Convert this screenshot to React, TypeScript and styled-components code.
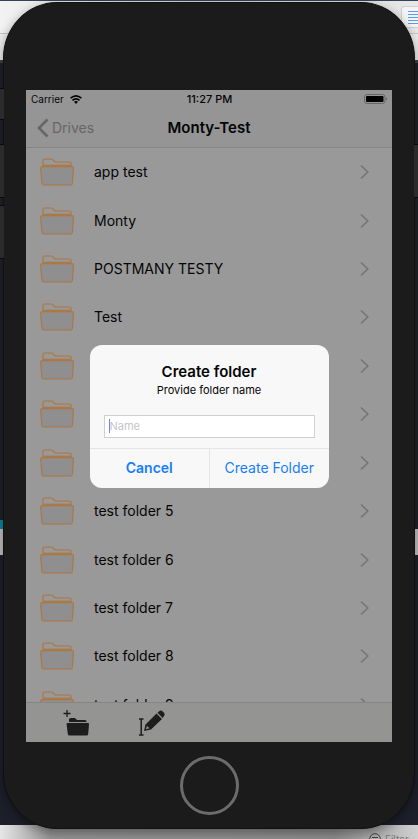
import React, { useState } from "react";
import styled, { createGlobalStyle } from "styled-components";

const GlobalStyle = createGlobalStyle`
  * { box-sizing: border-box; }
  html, body, #root { height: 100%; }
  body {
    margin: 0;
    overflow: hidden;
    font-family: Inter, "Liberation Sans", sans-serif;
    color: #050505;
  }
  button, input { font: inherit; }
  button { border: 0; padding: 0; background: none; cursor: pointer; }
`;

const Stage = styled.div`
  position: relative;
  height: 100%;
  padding: 2px 3px 10px;
  display: flex;
`;

/* Desktop windows that show around the simulator */
const Desktop = styled.div`
  position: absolute;
  inset: 0;
  z-index: -1;
  display: flex;
  flex-direction: column;
  background: #1d202b;
`;

const Strip = styled.div<{ $height: number; $fill: string }>`
  flex: 0 0 ${(p) => p.$height}px;
  background: ${(p) => p.$fill};
`;

const ToolStrip = styled.div`
  flex: 0 0 33px;
  display: flex;
  justify-content: flex-end;
  align-items: center;
  background: linear-gradient(90deg, #f2f2f2, #d4d4d4 50%, #e8e8e8);
  border-bottom: 1px solid #c8c8c8;
`;

const AlignButton = styled.button`
  width: 17px;
  height: 22px;
  border: 1px solid #d0d0d0;
  border-right: 0;
  border-radius: 4px 0 0 4px;
  background: #f4f4f4;
  display: flex;
  align-items: center;
  justify-content: flex-end;
`;

const Editor = styled.div`
  flex: 1;
  background: #1d202b;
`;

const FilterStrip = styled.div`
  flex: 0 0 14px;
  min-height: 0;
  overflow: hidden;
  display: flex;
  justify-content: flex-end;
  background: linear-gradient(90deg, #e6e6e6, #979797 12%, #909090 80%, #cfcfcf);
`;

const Filter = styled.label`
  flex: 0 0 54px;
  padding: 6px 0 0 4px;
  border-left: 1px solid #aaa;
  display: flex;
  gap: 4px;
  font-size: 10px;
  line-height: 16px;
  color: #777;

  svg { flex: none; margin-top: 2px; }
`;

const Phone = styled.main`
  position: relative;
  flex: 1;
  min-width: 0;
  display: flex;
  flex-direction: column;
  align-items: center;
  padding: 87px 22px 0;
  background: #1b1b1b;
  border: 1px solid #111;
  border-radius: 54px / 56px;
  box-shadow: 0 4px 12px rgba(0, 0, 0, 0.4);
`;

const SideKey = styled.span<{ $side: "left" | "right"; $top: number; $height: number }>`
  position: absolute;
  ${(p) => p.$side}: -4px;
  top: ${(p) => p.$top}px;
  width: 4px;
  height: ${(p) => p.$height}px;
  background: #2b2b2b;
  border: solid #0a0a0a;
  border-width: 1px 0;
`;

const Screen = styled.section`
  position: relative;
  align-self: stretch;
  flex: 1;
  min-height: 0;
  display: flex;
  flex-direction: column;
  background: #999;
`;

const StatusBar = styled.div`
  flex: 0 0 18px;
  display: grid;
  grid-template-columns: 1fr auto 1fr;
  align-items: center;
  padding: 0 4px 0 5px;
  background: #959595;
  font-size: 10px;
  line-height: 18px;
`;

const Carrier = styled.span`
  display: flex;
  align-items: center;
  gap: 6px;
`;

const Clock = styled.time`
  font-size: 11px;
  font-weight: 500;
`;

const Battery = styled.svg`
  justify-self: end;
`;

const NavBar = styled.header`
  flex: 0 0 40px;
  display: grid;
  grid-template-columns: 1fr auto 1fr;
  align-items: center;
  padding: 0 11px;
  background: #959595;
  border-bottom: 1px solid #858585;
`;

const BackButton = styled.button`
  justify-self: start;
  display: flex;
  align-items: center;
  gap: 3px;
  font-size: 14px;
  line-height: 20px;
  color: #666;
`;

const Title = styled.h1`
  margin: 0;
  font-size: 15px;
  line-height: 20px;
  font-weight: 600;
`;

const ListView = styled.div`
  flex: 1;
  min-height: 0;
  overflow: hidden;
`;

const Folders = styled.ul`
  margin: 0;
  padding: 0;
  height: 581px;
  list-style: none;
  display: grid;
  grid-auto-rows: 1fr;
`;

const FolderRow = styled.button`
  width: 100%;
  height: 100%;
  display: flex;
  align-items: center;
  padding: 0 23px 0 14px;
  color: inherit;
`;

const FolderName = styled.span`
  flex: 1;
  padding-left: 20px;
  text-align: left;
  font-size: 14px;
  line-height: 20px;
`;

const Toolbar = styled.footer`
  flex: 0 0 40px;
  display: flex;
  align-items: center;
  gap: 47px;
  padding: 0 37px;
  background: #949492;
  border-top: 1px solid #858585;
`;

const ToolButton = styled.button`
  display: flex;
`;

const Overlay = styled.div`
  position: absolute;
  inset: 0;
  display: flex;
  align-items: center;
  justify-content: center;
`;

const Dialog = styled.form`
  width: 239px;
  border-radius: 12px;
  overflow: hidden;
  background: #f8f8f8;
  text-align: center;
`;

const DialogBody = styled.div`
  padding: 17px 14px 10px;
`;

const DialogTitle = styled.h2`
  margin: 0;
  font-size: 15px;
  line-height: 20px;
  font-weight: 600;
`;

const DialogText = styled.label`
  display: block;
  font-size: 11px;
  line-height: 17px;
`;

const Field = styled.div`
  display: flex;
  align-items: center;
  height: 23px;
  margin-top: 16px;
  padding-left: 4px;
  border: 1px solid #d0d0d2;
  background: #fff;
`;

const Caret = styled.span`
  flex: 0 0 1px;
  height: 14px;
  background: #6f86f5;
`;

const NameInput = styled.input`
  flex: 1;
  min-width: 0;
  padding: 0;
  border: 0;
  outline: 0;
  background: transparent;
  font-size: 11px;
  line-height: 16px;
  &::placeholder { color: #c4c4c8; opacity: 1; }
`;

const Actions = styled.div`
  display: grid;
  grid-template-columns: 1fr 1fr;
  border-top: 1px solid #e6e6e6;
`;

const Action = styled.button<{ $strong?: boolean }>`
  height: 39px;
  font-size: 14px;
  line-height: 20px;
  font-weight: ${(p) => (p.$strong ? 600 : 400)};
  color: #157efb;
  white-space: nowrap;
  & + & { border-left: 1px solid #e6e6e6; }
`;

const Chin = styled.div`
  flex: 0 0 86px;
  display: flex;
  align-items: center;
  justify-content: center;
`;

const HomeButton = styled.button`
  width: 59px;
  height: 59px;
  border: 3px solid #6c6c6c;
  border-radius: 50%;
`;

const folders = [
  "app test", "Monty", "POSTMANY TESTY", "Test", "", "", "",
  "test folder 5", "test folder 6", "test folder 7", "test folder 8", "test folder 9",
];

const FolderIcon = () => (
  <svg width="34" height="28" viewBox="0 0 34 28" fill="none" stroke="#ad7742" strokeWidth="1.2" strokeLinejoin="round" aria-hidden="true">
    <path d="M3 8V2.500Q3 1 4.500 1H11Q12.200 1 13 2L14.500 3.500Q15 4 16 4H29.500Q31 4 31 5.500V8" />
    <path d="M3.500 7.300H30.500" />
    <path fill="#8f8f8f" d="M2.200 8.600H31.800Q33.500 8.600 33.400 10.300L32.400 25.300Q32.200 27 30.500 27H3.800Q2.100 27 1.900 25.300L.7 10.300Q.6 8.600 2.200 8.600Z" />
  </svg>
);

const Chevron = () => (
  <svg width="9" height="16" viewBox="0 0 9 16" fill="none" stroke="#747474" strokeWidth="1.5" aria-hidden="true">
    <path d="M1 1.500 7.800 8 1 14.500" />
  </svg>
);

export default function App() {
  const [name, setName] = useState("");
  return (
    <>
      <GlobalStyle />
      <Stage>
        <Desktop>
          <Strip $height={1} $fill="#34435c" />
          <ToolStrip>
            <AlignButton aria-label="Align">
              <svg width="10" height="13" viewBox="0 0 10 13" stroke="#5a9df0" aria-hidden="true">
                <path d="M0 .5H10M0 3.500H10M0 6.500H10M0 9.500H10M0 12.500H10" />
              </svg>
            </AlignButton>
          </ToolStrip>
          <Strip $height={26} $fill="#eeeeee" />
          <Strip $height={3} $fill="#41434c" />
          <Strip $height={457} $fill="#1f222c" />
          <Strip $height={9} $fill="linear-gradient(90deg, #0a87a3 50%, #1d202b 50%)" />
          <Strip $height={26} $fill="#c4c4c4" />
          <Editor />
          <FilterStrip>
            <Filter>
              <svg width="12" height="12" viewBox="0 0 12 12" fill="none" stroke="#444" aria-hidden="true">
                <circle cx="6" cy="6" r="5.300" />
                <path d="M3 4.500H9M4 6.500H8M5 8.500H7" />
              </svg>
              Filter
            </Filter>
          </FilterStrip>
        </Desktop>

        <Phone>
          <SideKey $side="left" $top={85} $height={32} />
          <SideKey $side="left" $top={141} $height={54} />
          <SideKey $side="left" $top={202} $height={54} />
          <SideKey $side="right" $top={141} $height={54} />
          <Screen>
            <StatusBar>
              <Carrier>
                Carrier
                <svg width="12" height="9" viewBox="0 0 12 9" fill="none" stroke="#000" strokeWidth="1.700" aria-hidden="true">
                  <path d="M.6 3.200Q6-1.400 11.400 3.200" />
                  <path d="M2.500 5.400Q6 2.400 9.500 5.400" />
                  <path d="M4 6.800Q6 5.200 8 6.800L6 8.900Z" fill="#000" stroke="none" />
                </svg>
              </Carrier>
              <Clock>11:27 PM</Clock>
              <Battery width="24" height="10" viewBox="0 0 24 10" aria-label="Battery full">
                <rect x=".5" y=".5" width="20.500" height="9" rx="2.500" fill="none" stroke="#666" />
                <rect x="2" y="2" width="17.500" height="6" rx="1" />
                <path d="M22 3.300Q24 5 22 6.700Z" fill="#666" />
              </Battery>
            </StatusBar>
            <NavBar>
              <BackButton>
                <svg width="12" height="20" viewBox="0 0 12 20" fill="none" stroke="#666" strokeWidth="2.600" aria-hidden="true">
                  <path d="M10.500 1.500 2 10 10.500 18.500" />
                </svg>
                Drives
              </BackButton>
              <Title>Monty-Test</Title>
            </NavBar>
            <ListView>
              <Folders>
                {folders.map((folder, index) => (
                  <li key={index}>
                    <FolderRow aria-label={folder || "Folder"}>
                      <FolderIcon />
                      <FolderName>{folder}</FolderName>
                      <Chevron />
                    </FolderRow>
                  </li>
                ))}
              </Folders>
            </ListView>
            <Toolbar>
              <ToolButton aria-label="New folder">
                <svg width="28" height="28" viewBox="0 0 28 28" fill="#1d1d1d" aria-hidden="true">
                  <path d="M4 1V8M.5 4.500H7.500" stroke="#1d1d1d" strokeWidth="1.300" />
                  <path d="M6 12V10.500Q6 9 7.500 9H12L14 11H22Q23.500 11 23.500 12.500V13H6Z" />
                  <path d="M4.500 14H25Q26.100 14 26 15.200L25.200 25Q25 26.500 23.600 26.500H6.300Q5 26.500 4.800 25L3.600 15.200Q3.500 14 4.500 14Z" />
                </svg>
              </ToolButton>
              <ToolButton aria-label="Rename">
                <svg width="28" height="28" viewBox="0 0 28 28" fill="#1d1d1d" aria-hidden="true">
                  <path d="M1 10H5.500M3.200 10V26M1 26H5.500" stroke="#1d1d1d" strokeWidth="1.500" />
                  <path fillRule="evenodd" d="M7.500 15.500 18.500 4.500 24 10 13 20.500 6 22ZM9 17 7.800 20.200 11.500 19.300Z" />
                  <path d="M19.500 3.800 21.500 2Q23 .8 24.500 2.200L26 3.800Q27.500 5.500 26 7L24.700 9Z" />
                </svg>
              </ToolButton>
            </Toolbar>
            <Overlay>
              <Dialog role="dialog" aria-labelledby="dialog-title" onSubmit={(e) => e.preventDefault()}>
                <DialogBody>
                  <DialogTitle id="dialog-title">Create folder</DialogTitle>
                  <DialogText htmlFor="folder-name">Provide folder name</DialogText>
                  <Field>
                    <Caret />
                    <NameInput id="folder-name" placeholder="Name" value={name} onChange={(e) => setName(e.target.value)} />
                  </Field>
                </DialogBody>
                <Actions>
                  <Action type="button" $strong>Cancel</Action>
                  <Action type="submit">Create Folder</Action>
                </Actions>
              </Dialog>
            </Overlay>
          </Screen>
          <Chin>
            <HomeButton aria-label="Home" />
          </Chin>
        </Phone>
      </Stage>
    </>
  );
}
